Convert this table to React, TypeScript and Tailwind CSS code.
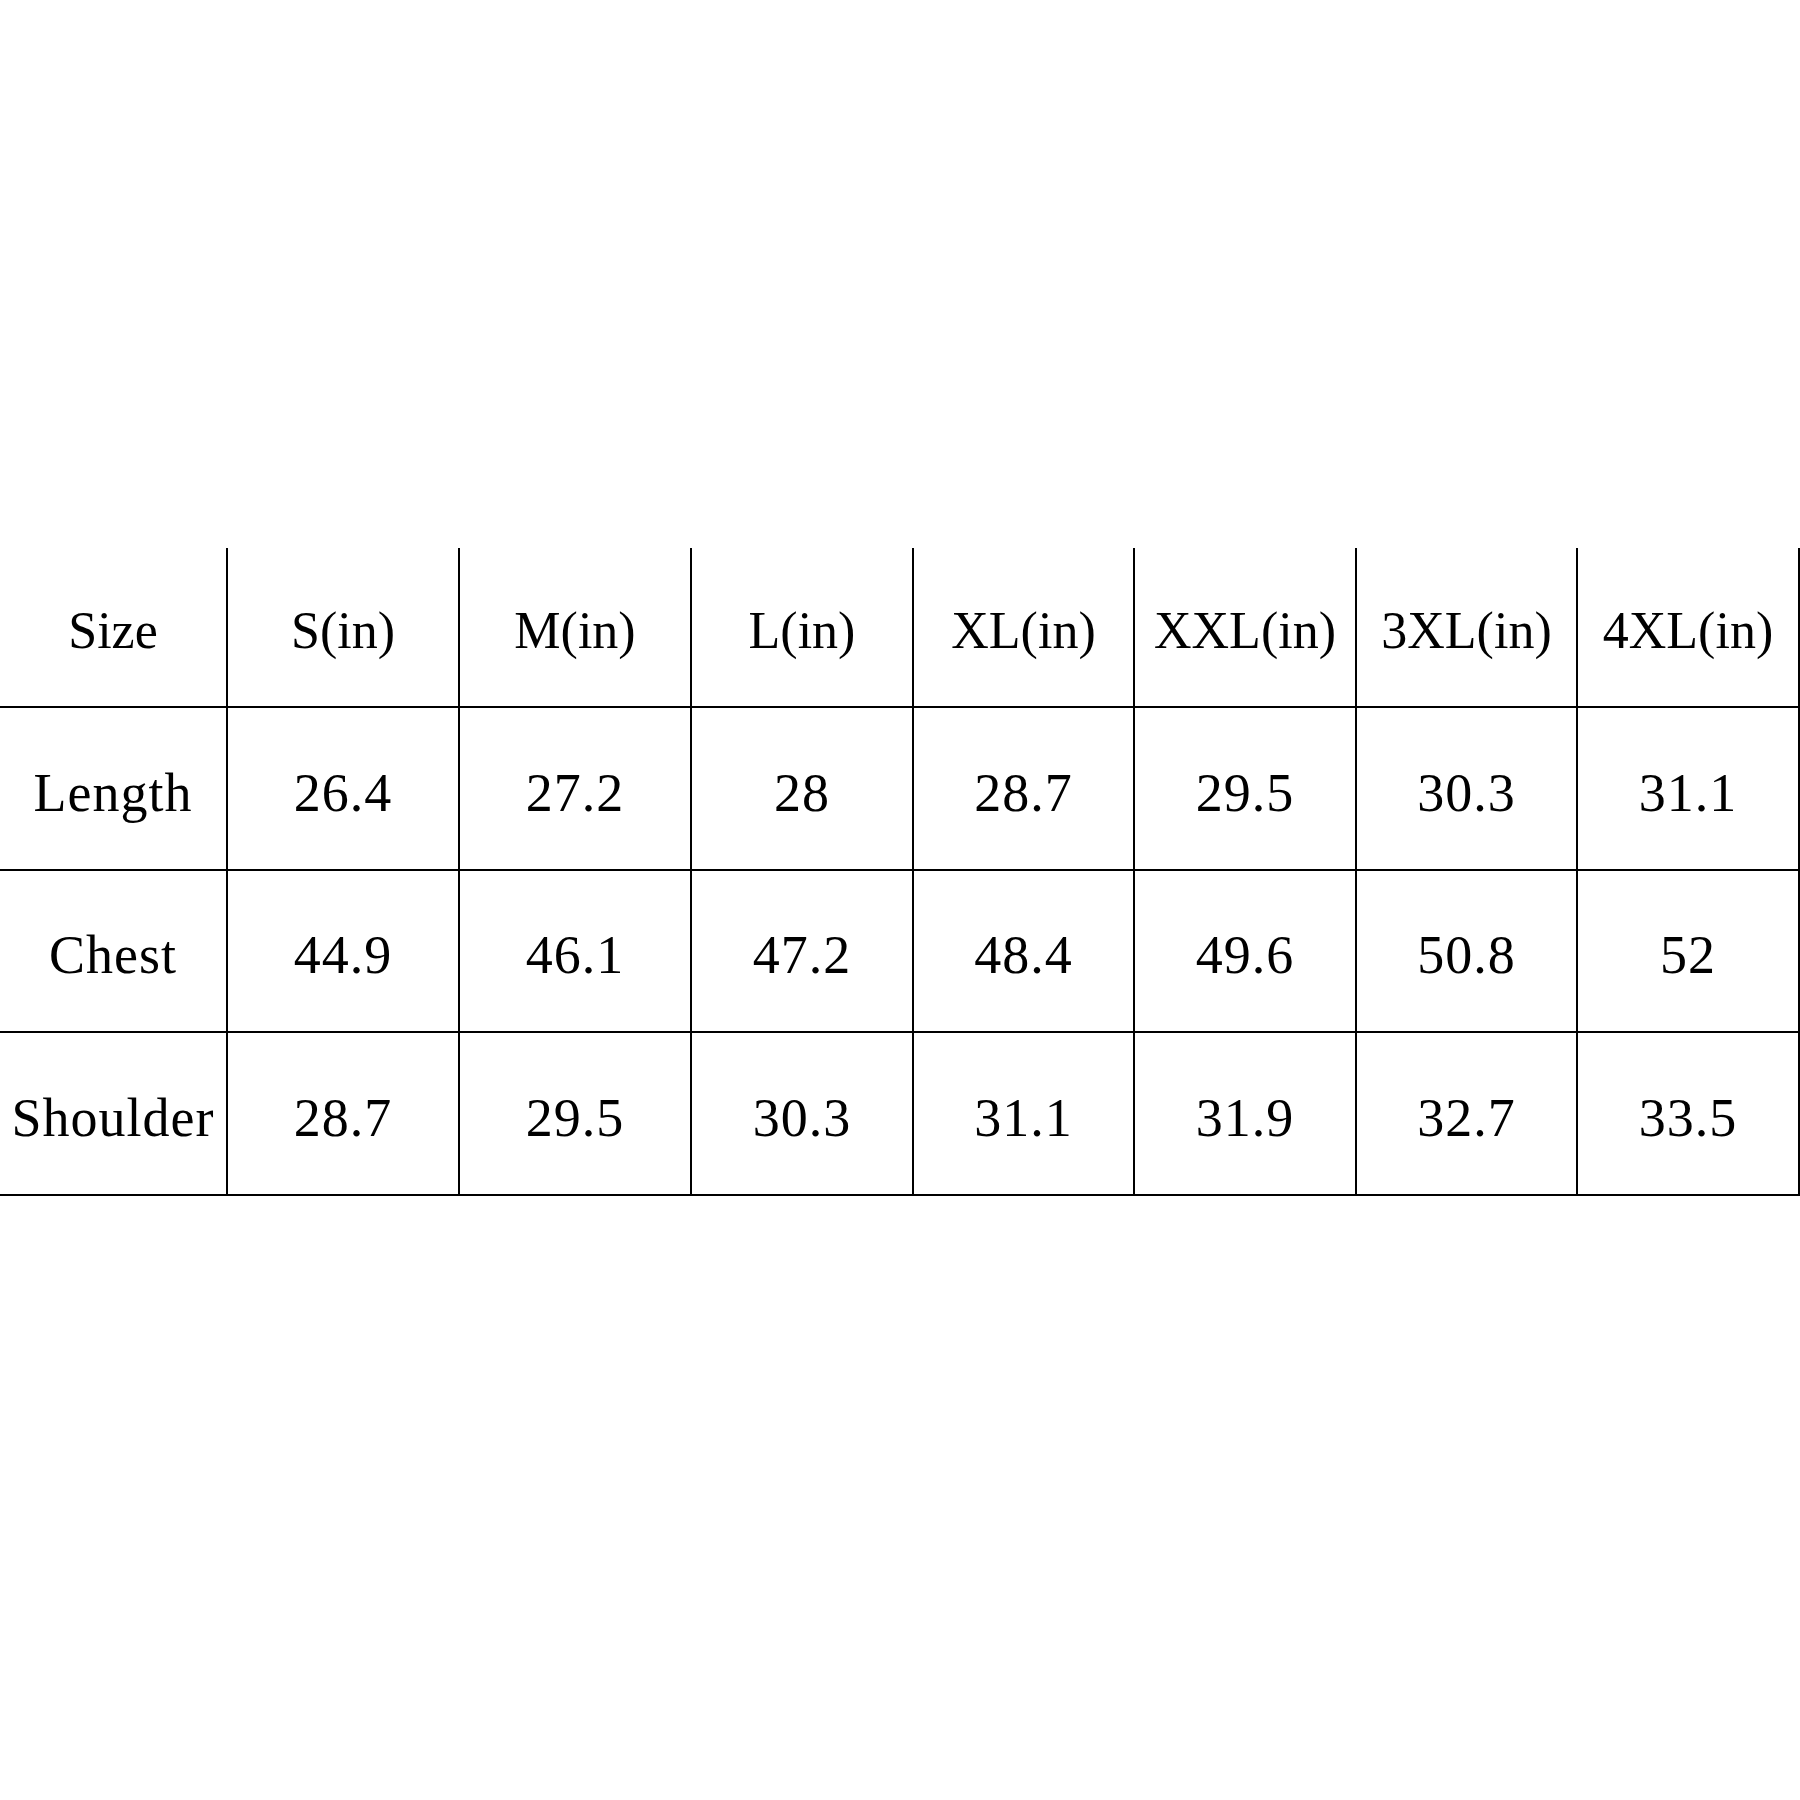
const header = ["Size", "S(in)", "M(in)", "L(in)", "XL(in)", "XXL(in)", "3XL(in)", "4XL(in)"]

const rows = [
  ["Length", "26.4", "27.2", "28", "28.7", "29.5", "30.3", "31.1"],
  ["Chest", "44.9", "46.1", "47.2", "48.4", "49.6", "50.8", "52"],
  ["Shoulder", "28.7", "29.5", "30.3", "31.1", "31.9", "32.7", "33.5"],
]

export default function App() {
  return (
    <div className="min-h-[1800px] w-[1800px] bg-white pt-[548px] font-['Liberation_Serif',serif] text-black">
      <div className="grid grid-cols-[228px_232px_232px_222px_221px_222px_221px_222px] grid-rows-[160px_163px_162px_163px]">
        {header.map((h) => (
          <div key={h} className="flex items-center justify-center border-r-2 border-b-2 border-black pt-2 text-[52px] leading-none">
            {h}
          </div>
        ))}
        {rows.map((row) =>
          row.map((cell, i) => (
            <div key={row[0] + i} className="flex items-center justify-center border-r-2 border-b-2 border-black pt-2 text-[54px] leading-none tracking-[1px]">
              {cell}
            </div>
          ))
        )}
      </div>
    </div>
  )
}
